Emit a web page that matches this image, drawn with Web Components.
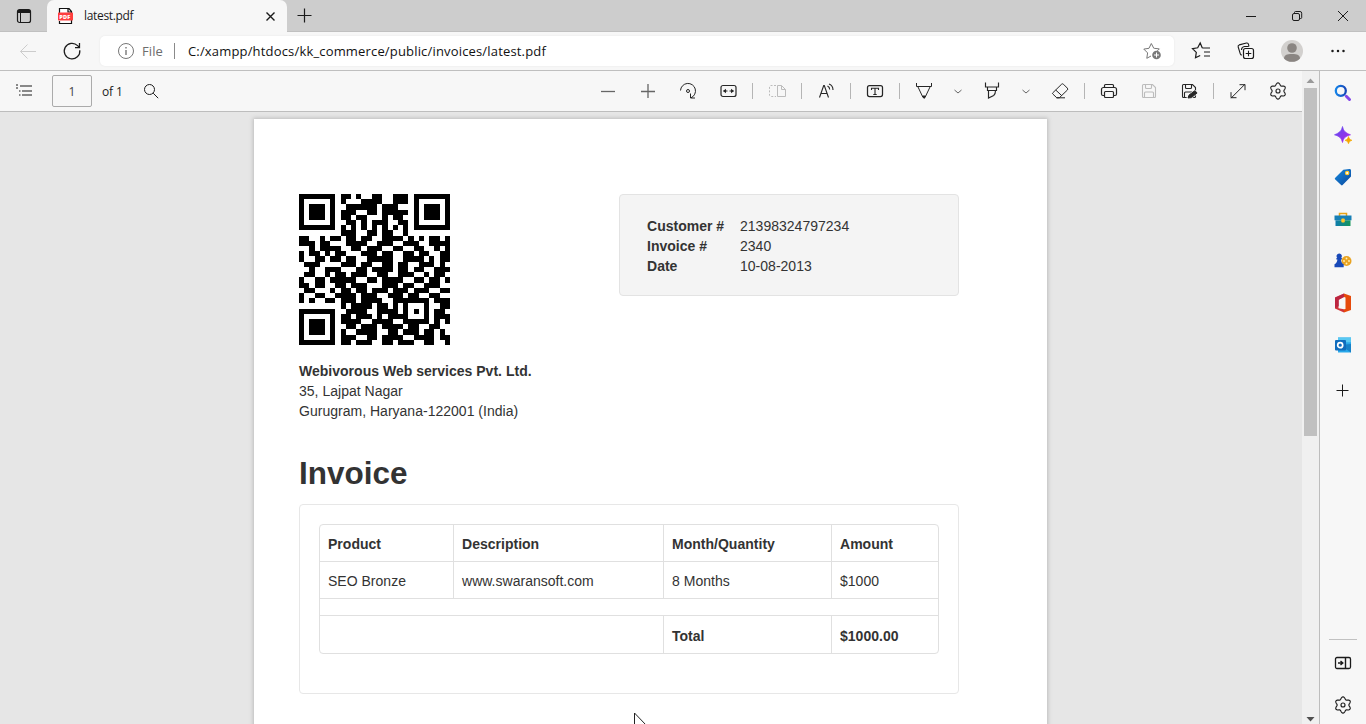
<!DOCTYPE html>
<html lang="en">
<head>
<meta charset="utf-8">
<title>latest.pdf</title>
<style>
html,body{margin:0;height:100%;overflow:hidden;background:#f7f7f7}
body{font-family:"Open Sans","Noto Sans",sans-serif;color:#1b1b1b}
</style>
</head>
<body>
<browser-window></browser-window>
<script>
const define = (name, html, setup) => customElements.define(name, class extends HTMLElement {
  connectedCallback() {
    if (this.shadowRoot) return;
    const root = this.attachShadow({mode: 'open'});
    const t = document.createElement('template');
    t.innerHTML = typeof html === 'function' ? html(this) : html;
    root.append(t.content.cloneNode(true));
    if (setup) setup(this, root);
  }
});

// Six rounded teeth around a small hub.
const gearOutline = Array.from({length: 72}, (_, i) => {
  const a = i * Math.PI / 36, r = 7 + 1.15 * Math.cos(6 * a);
  return `${(12 + r * Math.sin(a)).toFixed(2)} ${(12 - r * Math.cos(a)).toFixed(2)}`;
}).join('L');
const gear = `<path d="M${gearOutline}z" stroke-width="1.15"/><circle cx="12" cy="12" r="2" stroke-width="1.15"/>`;
const save = '<path d="M5.5 6.5a1 1 0 0 1 1-1h9l3 3v9a1 1 0 0 1-1 1h-11a1 1 0 0 1-1-1zM8.5 5.5v3a1 1 0 0 0 1 1h4a1 1 0 0 0 1-1v-3M7.5 18v-4a1 1 0 0 1 1-1h7a1 1 0 0 1 1 1v4" stroke-width="1.1"/>';
const ICONS = {
  tabs: '<rect x="5.5" y="5.5" width="13" height="13" rx="2" stroke-width="1.2"/><path d="M6 7.5h12" stroke-width="3"/><path d="M8.5 9v9"/>',
  close: '<path d="m8.5 8.5 8 8m0-8-8 8" stroke-width="1.4"/>',
  plus: '<path d="M12.5 5.5v14M5.5 12.5h14" stroke-width="1.2"/>',
  add: '<path d="M11.5 6.500v12M5.500 12.500h12" stroke-width="1"/>',
  back: '<path d="M20 12.5H4.5M11.500 5.500l-7 7 7 7"/>',
  reload: '<path d="M19.800 11.200A7.800 7.800 0 1 1 17.600 6.600l1.900 1.900M19.500 4v4.500H15" stroke-width="1.25"/>',
  info: '<circle cx="12" cy="12" r="7.5"/><path d="M12 11v5M12 8v1.400" stroke-width="1.4"/>',
  min: '<path d="M7 12.500h10"/>',
  restore: '<rect x="7.500" y="9.500" width="7" height="7" rx="1.500"/><path d="M9.500 9V8.500a1 1 0 0 1 1-1H15a1.700 1.700 0 0 1 1.700 1.700v4.300a1 1 0 0 1-1 1H15"/>',
  winclose: '<path d="m7 7 10 10m0-10L7 17"/>',
  staradd: '<path d="m14.300 9.300 5 .6-2 2M11 17l-4.200 2.300.8-5.400-3.800-3.800 5.200-.8L11.300 4.500l2.500 4.800.5.100" /><circle cx="16.500" cy="16" r="4.300" fill="currentColor" stroke="none"/><path d="M16.500 13.500v5M14 16h5" stroke="#fff"/>',
  favs: '<path d="m13 9.500-.8-.2L10.200 4.500 7.700 9.300l-5.200.8 3.800 3.800-.8 5.400 4.700-2.300M13 9.500h7M14 13.500h6M14 17.500h6" stroke-width="1.2" transform="translate(0 -.5)"/>',
  collections: '<rect x="9.500" y="9.500" width="10" height="10" rx="2" stroke-width="1.200"/><path d="M14.500 11.700v5.600M11.700 14.500h5.600M8 16c-1 .1-1.500-.4-1.700-1.200L4.200 8c-.3-1 .1-1.800 1-2.100L12.500 4c1-.2 1.700.2 1.900 1.100L15 7.500M7.500 11c0-2 1-3.300 3-3.500h4" stroke-width="1.1"/>',
  more: '<g fill="currentColor" stroke="none"><circle cx="6.500" cy="12" r="1.250"/><circle cx="12" cy="12" r="1.250"/><circle cx="17.500" cy="12" r="1.250"/></g>',
  avatar: '<g stroke="none"><circle cx="12" cy="12" r="11" fill="#d2d0ce"/><circle cx="12" cy="9" r="4.800" fill="#8a8582"/><path d="M4 19.400c0-3.100 2.500-4.500 8-4.500s8 1.400 8 4.500a11 11 0 0 1-16 0z" fill="#8a8582"/></g>',
  list: '<path d="M8 7.500h12M10 12.500h10M10 16.500h10M4 6.500h2M4 9.500h2M7 12.500h1.500M7 16.500h1.500" stroke-width="1.1" transform="translate(0 -.5)"/>',
  search: '<circle cx="10.500" cy="10.500" r="5"/><path d="m14.200 14.200 5 5"/>',
  zoomout: '<path d="M5 12.500h14" stroke-width="1.3"/>',
  zoomin: '<path d="M5 12.500h14M12 5v14" stroke-width="1.3"/>',
  rotate: '<path d="M4.500 11.500A7.500 7.500 0 1 1 15 18.800M14.500 14.500v4.500h4.500"/><circle cx="12" cy="12" r="1.500"/>',
  fit: '<rect x="5" y="6.500" width="15" height="11" rx="2" stroke-width="1.2"/><path d="M7 12 10 9.800v4.400zM18 12l-3-2.200v4.400z" fill="currentColor" stroke="none"/><path d="M7.500 12h4M13.500 12h4"/>',
  view: '<path d="M12.500 6.500h4l4 4v7h-8zM16.500 6.500v4h4"/><path d="M11 6.500H6a1.500 1.500 0 0 0-1.500 1.500v8A1.500 1.500 0 0 0 6 17.500h5" stroke-dasharray="2 1.500"/>',
  read: '<path d="m5.500 18.500 4.200-12h.6l4.200 12M7 14.500h6M13.500 7c1.500.7 2.200 2 2.200 3.600M15 5c2.700 1 4 3.200 4 5.900" stroke-width="1.1"/>',
  text: '<rect x="4.500" y="6.500" width="15" height="11" rx="2" stroke-width="1.25"/><path d="M8.500 11V9.200h7V11M12 9.200v6M10.300 15.500h3.400" stroke-width="1.1"/>',
  draw: '<path d="M4.500 4v3.500h15V4M6 8l5 10.500h2L18 8"/><path d="M10.500 17h3l-1.300 2.400z" fill="currentColor"/>',
  chev: '<path d="m8.500 11 3.500 3 3.500-3"/>',
  highlight: '<path d="M5.500 3.500v4.500h13V3.500M7.500 8v3.500h9V8M8.500 11.500v7.500l5.200-2.600c1.200-.8 1.800-2.300 1.800-4.900" stroke-width="1.15"/>',
  erase: '<path d="M4.800 13.500 13.500 5a1.400 1.400 0 0 1 2 0l3.800 3.800a1.400 1.400 0 0 1 0 2l-8 7.700H8.800l-4-3.800a.8.8 0 0 1 0-1.200zM7.800 10.800l6 5.600M8.500 18.500H17" transform="translate(0 .3)"/>',
  print: '<path d="M7.500 8.500v-2a1 1 0 0 1 1-1h7a1 1 0 0 1 1 1v2M7.500 16.500H6A1.500 1.500 0 0 1 4.500 15v-4.500a2 2 0 0 1 2-2h11a2 2 0 0 1 2 2V15a1.500 1.500 0 0 1-1.500 1.500h-1.500" stroke-width="1.2"/><rect x="7.500" y="12.500" width="9" height="6" rx="1" stroke-width="1.2"/>',
  save,
  saveas: save + '<path d="m9 21 1.200-4.500 7.400-6 4 3.500-7.400 6z" fill="#f7f7f7" stroke="none"/><path d="m11 19 1-2.900 5.800-4.400 2.300 2.200-5.600 4.700z" fill="currentColor"/>',
  full: '<path d="m5 19 14-14M13.500 5.500h5.500V11M5 13v5.500h5.500" transform="translate(0 .2)"/>',
  gear,
  panel: '<rect x="4.500" y="6.500" width="15" height="11" rx="1.500" stroke-width="1.3"/><path d="M14.500 7v10M7 12h4.500M9.500 10l2.300 2-2.300 2" stroke-width="1.4"/>',
  pdf: '<path d="M5.500 9V4.500H15L17.500 7.500v12h-12V17M14 4.500V8h3.500" fill="#fff" stroke="#111" stroke-width="1.2"/><rect x="4" y="8.500" width="15" height="8" rx=".7" fill="#ff3e3e" stroke="none"/>',
  ssearch: '<circle cx="9.800" cy="9.800" r="5" stroke="url(#gs)" stroke-width="2.3"/><path d="m15.300 15.300 3.200 3.200" stroke="#8546e8" stroke-width="3" stroke-linecap="round"/>',
  discover: '<g stroke="none"><path d="M11.500 3.500c1.200 4.600 2.500 6 8 8.300-5.500 1.700-6.800 3.200-8 7.700-1.200-4.500-2.700-6-8-7.700 5.300-2.300 6.800-3.700 8-8.300z" fill="url(#gp)" stroke="url(#gp)" stroke-width=".7"/><path d="M17.500 13.500c.7 2.300 1.400 3 3.500 3.800-2.100.7-2.800 1.400-3.500 3.500-.7-2.100-1.400-2.800-3.500-3.500 2.100-.8 2.800-1.500 3.500-3.800z" fill="#f5a800" stroke="#f5a800" stroke-width=".6"/></g>',
  tag: '<path d="m4 13 8.300-8.300 6.200-.7c1 0 1.500.6 1.500 1.500v6L11.600 20c-.5.500-1 .5-1.500 0L4 14.200a1 1 0 0 1 0-1.200z" fill="url(#gb)" stroke="none"/><circle cx="16.200" cy="8" r="1.700" fill="#fff" stroke="#ffc928" stroke-width="1.200"/>',
  tools: '<path d="M8.500 9V6.500h7V9" stroke="#e8a317" stroke-width="1.500"/><path d="M3.500 8.500h17v4.800h-17z" fill="#177fb5" stroke="none"/><path d="M4.500 13.300h15V19h-15z" fill="url(#gt)" stroke="none"/><rect x="10.300" y="11.500" width="3.500" height="4" rx="1" fill="#ffc629" stroke="none"/>',
  games: '<g stroke="none"><circle cx="15.500" cy="12" r="5" fill="#e9a321"/><g fill="#fff1bd"><circle cx="13" cy="12" r=".9"/><circle cx="15.500" cy="9.500" r=".9"/><circle cx="18" cy="12" r=".9"/><circle cx="15.500" cy="14.500" r=".9"/></g><path d="M8.300 4.500a2.600 2.600 0 0 1 1.800 4.400h.8v1.500h-1c.1 2.300.8 3.700 2.800 4.900v2.900H3.500v-2.900c2-1.200 2.700-2.600 2.900-4.900h-1V8.900h.9a2.600 2.600 0 0 1 2-4.400z" fill="#1849b8"/></g>',
  office: '<g stroke="none"><path d="M13 2.500 4 6.400v11l9 4.100v-3.200l-5.500-1V9L13 6z" fill="#d13438"/><path d="m13 2.500 7 2.500v14l-7 2.500v-3.200l1.500-.4V6.500L13 6z" fill="#e64a0b"/><path d="m4 6.400 9-3.900V6L8 8.500V15l-4 2z" fill="#b01d45" opacity=".65"/></g>',
  outlook: '<g stroke="none"><path d="M7 4.500h13v15H7z" fill="#28a8ea"/><path d="M7 4.500h13v4.800H7z" fill="#58c8f2"/><path d="m9 12 11 7.500V11z" fill="#1681c8"/><rect x="4" y="7" width="11" height="10.500" rx="1" fill="#0f6cbd"/></g><circle cx="9.200" cy="12.200" r="2.500" stroke="#fff" stroke-width="1.700"/>',
};
define('ui-icon', el => `<style>:host{display:inline-flex;flex:none;width:24px;height:24px}svg{width:24px;height:24px;overflow:visible;display:block}
text{font:800 5.600px "Open Sans",sans-serif;fill:#fff;stroke:none;letter-spacing:.2px}</style>
<svg viewBox="0 0 24 24" fill="none" stroke="currentColor"><defs>
<linearGradient id="gs"><stop stop-color="#1583e8"/><stop offset="1" stop-color="#1647b8"/></linearGradient>
<linearGradient id="gp" x2="1" y2="1"><stop stop-color="#5b4ff0"/><stop offset="1" stop-color="#b024e8"/></linearGradient>
<linearGradient id="gb" x2="1" y2="1"><stop stop-color="#168be0"/><stop offset="1" stop-color="#0b479c"/></linearGradient>
<linearGradient id="gt"><stop stop-color="#0d7cae"/><stop offset="1" stop-color="#15965a"/></linearGradient></defs>
${ICONS[el.getAttribute('name')]}${el.getAttribute('name') === 'pdf' ? '<text x="5.200" y="14.600">PDF</text>' : ''}</svg>`);

define('tool-button', el => `<style>:host{display:flex;flex:none;align-items:center;justify-content:center;width:40px;height:40px;color:#262626}
:host([small]){width:28px}:host([muted]){color:#bcbcbc}:host([soft]){color:#666}</style><ui-icon name="${el.getAttribute('icon')}"></ui-icon>`);
define('tool-separator', `<style>:host{display:flex;flex:none;width:9px;justify-content:center}i{width:1px;height:16px;background:#b5b5b5}</style><i></i>`);

define('tab-strip', `<style>
:host{display:flex;height:32px;background:#cdcdcd;box-shadow:inset 0 -1px #c0c0c0;box-sizing:border-box}
.menu{width:47px;display:flex;align-items:center;justify-content:center;padding-left:1px;box-sizing:border-box}
.tab{display:flex;align-items:center;width:240px;height:32px;box-sizing:border-box;background:#f7f7f7;border-radius:7px 7px 0 0;padding:0 5px 0 7px;font-size:12px}
.tab span{flex:1;padding-left:6px;letter-spacing:-.33px;margin-top:-1px}
.new{margin:3px 0 0 5px}
.win{margin-left:auto;display:flex}
.win div{width:46px;display:flex;justify-content:center;align-items:center}
</style>
<div class="menu"><ui-icon name="tabs"></ui-icon></div>
<div class="tab"><ui-icon name="pdf"></ui-icon><span>latest.pdf</span><ui-icon name="close"></ui-icon></div>
<ui-icon class="new" name="plus"></ui-icon>
<div class="win"><div><ui-icon name="min"></ui-icon></div><div><ui-icon name="restore"></ui-icon></div><div><ui-icon name="winclose"></ui-icon></div></div>`);

define('address-bar', `<style>
:host{display:flex;align-items:center;height:38px;background:#f7f7f7;border-bottom:1px solid #bfbfbf;box-sizing:content-box}
.back{color:#ccc;margin-left:16px}.re{margin-left:20px}
.box{display:flex;align-items:center;width:1074px;height:30px;margin-left:16px;background:#fff;border-radius:5px;box-shadow:0 0 2px #e4e4e4;box-sizing:border-box;padding:0 10px 0 14px;font-size:13px}
.info{color:#777}.file{color:#6d6d6d;margin-left:4px;letter-spacing:.1px}
i{width:1px;height:16px;background:#8a8a8a;margin:0 13px 0 11px}
.url{flex:1;color:#111;letter-spacing:.17px;white-space:nowrap}.star{color:#777}
.b{margin-left:16px}.c{margin-left:20px}.d{margin-left:22px}
</style>
<ui-icon class="back" name="back"></ui-icon><ui-icon class="re" name="reload"></ui-icon>
<div class="box"><ui-icon class="info" name="info"></ui-icon><span class="file">File</span><i></i><span class="url">C:/xampp/htdocs/kk_commerce/public/invoices/latest.pdf</span><ui-icon class="star" name="staradd"></ui-icon></div>
<ui-icon class="b" name="favs"></ui-icon><ui-icon class="c" name="collections"></ui-icon><ui-icon class="d" name="avatar"></ui-icon><ui-icon class="d" name="more"></ui-icon>`);

define('pdf-toolbar', `<style>
:host{display:flex;align-items:center;flex:none;height:41px;box-sizing:border-box;border-bottom:1px solid #bdbdbd;background:#f7f7f7;padding:0 4px 0 12px;font-size:12px}
.num{display:flex;align-items:center;justify-content:center;width:40px;height:32px;box-sizing:border-box;border:1px solid #ababab;border-radius:2px;margin:0 10px 0 16px;color:#444}
.of{width:37px;letter-spacing:-.1px;white-space:nowrap}.right{display:flex;margin-left:auto;align-items:center}
</style>
<ui-icon name="list"></ui-icon><span class="num">1</span><span class="of">of 1</span><ui-icon name="search"></ui-icon>
<div class="right">
<tool-button soft icon="zoomout"></tool-button><tool-button soft icon="zoomin"></tool-button><tool-button icon="rotate"></tool-button><tool-button icon="fit"></tool-button>
<tool-separator></tool-separator><tool-button muted icon="view"></tool-button><tool-separator></tool-separator><tool-button icon="read"></tool-button>
<tool-separator></tool-separator><tool-button icon="text"></tool-button><tool-separator></tool-separator><tool-button icon="draw"></tool-button><tool-button small soft icon="chev"></tool-button>
<tool-button icon="highlight"></tool-button><tool-button small soft icon="chev"></tool-button><tool-button icon="erase"></tool-button><tool-separator></tool-separator>
<tool-button icon="print"></tool-button><tool-button muted icon="save"></tool-button><tool-button icon="saveas"></tool-button><tool-separator></tool-separator>
<tool-button icon="full"></tool-button><tool-button icon="gear"></tool-button></div>`);

const QR = [
'#######.##.#..##..###.#######',
'#.....#.#...####..###.#.....#',
'#.###.#..######.###...#.###.#',
'#.###.#.###..##.#####.#.###.#',
'#.###.#.##.##...#.##..#.###.#',
'#.....#..##.#.###..##.#.....#',
'#######.#.#.#.#.#.#.#.#######',
'........###..##.##..#........',
'##..#.##.##.##..####.#.#.##.#',
'###.##...####..###..###..####',
'..#.####..##.###..##..##..#.#',
'#.##.#.##...###.##..##.##..##',
'#..##.##.##..#####..####.#.##',
'.###....###.##..##.##..###.#.',
'..#..###...##.####.##.##..###',
'.##..#.##.###..##..###..#.##.',
'#..##.#####..##.####..##.##.#',
'##.##..##.###...###.##..###..',
'.##...#.##.##.###.###.###..##',
'#..##..####.###..###.##..##..',
'#.#..##.###.####..#######.###',
'........#.####.##.#.#...#..##',
'#######..####..####.#.#.#.##.',
'#.....#.##.###.#.####...#.###',
'#.###.#.####..####..#####.#.#',
'#.###.#..##.###.####.##..##..',
'#.###.#.#..####..##.###.##.#.',
'#.....#.###..##.####..####.##',
'#######.##.###..##.###..##..#'];
define('qr-code', () => {
  let d = '';
  QR.forEach((r, y) => { for (const m of r.matchAll(/#+/g)) d += `M${m.index} ${y}h${m[0].length}v1h-${m[0].length}z`; });
  return `<style>:host{display:block;width:151px;height:151px}svg{display:block}</style><svg width="151" height="151" viewBox="0 0 29 29" shape-rendering="crispEdges"><path d="${d}"/></svg>`;
});

define('customer-card', `<style>
:host{display:block;box-sizing:border-box;width:340px;height:102px;border:1px solid #e3e3e3;border-radius:4px;background:#f4f4f4;padding:21px 27px}
dl{display:grid;grid-template-columns:93px 1fr;grid-auto-rows:20px;margin:0}dt{font-weight:700;white-space:nowrap}dd{margin:0}
</style><dl><dt>Customer #</dt><dd>21398324797234</dd><dt>Invoice #</dt><dd>2340</dd><dt>Date</dt><dd>10-08-2013</dd></dl>`);

define('invoice-table', `<style>
:host{display:block;box-sizing:border-box;width:660px;height:190px;border:1px solid #e7e7e7;border-radius:4px;padding:19px}
.t{display:grid;grid-template-columns:133px 210px 168px 1fr;grid-template-rows:36px 37px 17px 38px;border:1px solid #e0e0e0;border-radius:4px}
.t>*{border-left:1px solid #e0e0e0;border-top:1px solid #e0e0e0;padding:9px 8px 0;line-height:20px;box-sizing:border-box}
.t>.f{border-left:0;padding-left:8px}.t>.n{border-top:0;padding-top:9px}.t>.l{padding-top:10px}.w{grid-column:1/5}.s{grid-column:1/3}
</style><div class="t"><b class="f n">Product</b><b class="n">Description</b><b class="n">Month/Quantity</b><b class="n">Amount</b>
<span class="f">SEO Bronze</span><span>www.swaransoft.com</span><span>8 Months</span><span>$1000</span>
<span class="f w"></span><span class="f s"></span><b class="l">Total</b><b class="l">$1000.00</b></div>`);

define('pdf-page', `<style>
:host{display:block;width:793px;height:1123px;box-sizing:border-box;flex:none;background:#fff;box-shadow:0 0 4px 1px #bcbcbc;padding:75px 88px 0 45px;font:14px/20px "Liberation Sans",Arial,sans-serif;letter-spacing:.015px;color:#333}
.top{display:flex;justify-content:space-between;width:660px}
address{font-style:normal;margin-top:16px}h1{font-size:31.5px;line-height:40px;margin:32px 0 11px}
</style><div class="top"><qr-code></qr-code><customer-card></customer-card></div>
<address><b>Webivorous Web services Pvt. Ltd.</b><br>35, Lajpat Nagar<br>Gurugram, Haryana-122001 (India)</address>
<h1>Invoice</h1><invoice-table></invoice-table>`);

define('scroll-track', `<style>:host{display:flex;flex-direction:column;align-items:center;width:17px;box-sizing:border-box;background:#f0f0f0;padding-right:1px}
svg{display:block;flex:none}.thumb{width:13px;height:348px;background:#c0c0c0;margin-bottom:auto}</style>
<svg width="16" height="17"><path d="M4.500 12 8.500 7.500l4 4.500z" fill="#999"/></svg><div class="thumb"></div><svg width="16" height="12"><path d="M4.500 5h8l-4 4.500z" fill="#505050"/></svg>`);

define('side-bar', `<style>:host{display:flex;flex-direction:column;align-items:center;width:47px;box-sizing:border-box;border-left:1px solid #bdbdbd;background:#f7f7f7;padding-top:1px}
div{height:42px;display:flex;align-items:center;flex:none}.add{margin-top:3px}hr{width:28px;border:0;border-top:1px solid #c1c1c1;margin:auto 0 2px}.last{margin-bottom:-2px}</style>
${['ssearch','discover','tag','tools','games','office','outlook'].map(n => `<div><ui-icon name="${n}"></ui-icon></div>`).join('')}
<div class="add"><ui-icon name="add"></ui-icon></div><hr><div><ui-icon name="panel"></ui-icon></div><div class="last"><ui-icon name="gear"></ui-icon></div>`);

define('mouse-pointer', `<style>:host{position:absolute;left:633px;top:712px}svg{display:block}</style><svg width="14" height="21"><path d="M1.500 1v16l4-3.500 2.500 6 2.500-1-2.500-5.500h5z" fill="#fff" stroke="#222"/></svg>`);

define('browser-window', `<style>
:host{display:flex;flex-direction:column;width:1366px;height:724px;overflow:hidden;position:relative}
main{display:flex;flex:1;min-height:0}.viewer{display:flex;flex-direction:column;flex:1;min-width:0}
.canvas{flex:1;min-height:0;overflow:hidden;background:#e6e6e6;display:flex;justify-content:center;padding:7px 1px 0 0}
</style><tab-strip></tab-strip><address-bar></address-bar>
<main><div class="viewer"><pdf-toolbar></pdf-toolbar><div class="canvas"><pdf-page></pdf-page></div></div><scroll-track></scroll-track><side-bar></side-bar></main><mouse-pointer></mouse-pointer>`);
</script>
</body>
</html>
